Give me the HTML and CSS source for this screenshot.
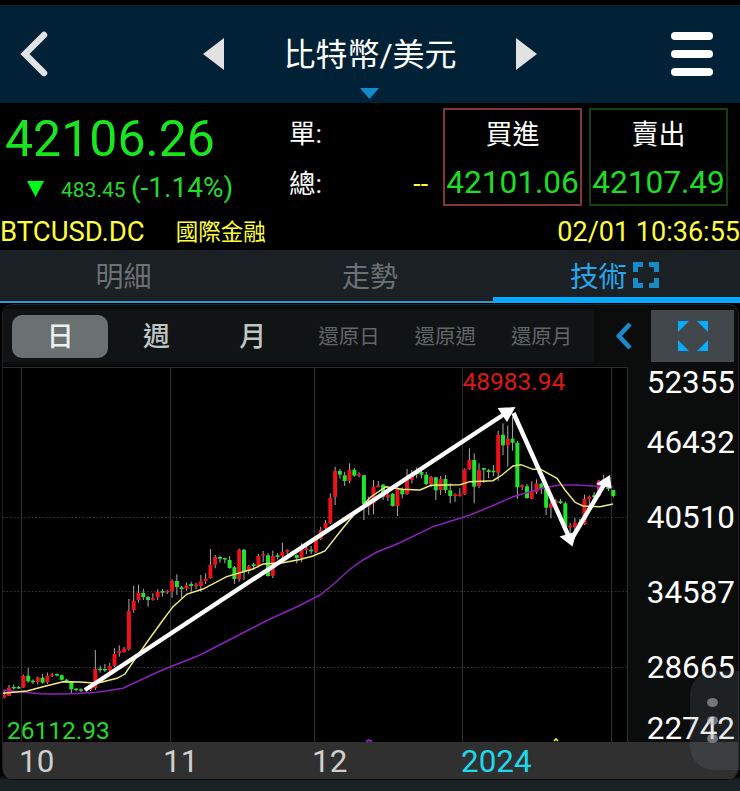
FILE: index.html
```html
<!DOCTYPE html>
<html lang="zh-Hant">
<head>
<meta charset="utf-8">
<title>比特幣/美元</title>
<link rel="stylesheet" href="styles.css">
</head>
<body>
<header class="topbar">
  <svg class="back" width="30" height="48" viewBox="0 0 30 48"><path d="M25 5 L6 24 L25 43" fill="none" stroke="#e2e2e4" stroke-width="6.5" stroke-linecap="round" stroke-linejoin="miter"/></svg>
  <div class="switcher">
    <svg width="21" height="32" viewBox="0 0 21 32"><path d="M21 0V32L0 16Z" fill="#e2e2e2"/></svg>
    <h1 class="title">比特幣/美元</h1>
    <svg width="21" height="32" viewBox="0 0 21 32"><path d="M0 0V32L21 16Z" fill="#e2e2e2"/></svg>
  </div>
  <div class="menu"><i></i><i></i><i></i></div>
  <svg class="drop" width="19" height="11" viewBox="0 0 19 11"><path d="M0 0H19L9.5 11Z" fill="#1489d0"/></svg>
</header>
<section class="quote">
  <div class="last">
    <div class="price">42106.26</div>
    <div class="change"><svg width="17" height="16" viewBox="0 0 17 16"><path d="M0 0H17L8.5 16Z" fill="#00fa1c"/></svg><span class="diff">483.45</span><span class="pct">(-1.14%)</span></div>
  </div>
  <div class="volume">
    <div class="vol-row"><span>單:</span></div>
    <div class="vol-row"><span>總:</span><b class="none">--</b></div>
  </div>
  <div class="deal buy"><span>買進</span><strong>42101.06</strong></div>
  <div class="deal sell"><span>賣出</span><strong>42107.49</strong></div>
</section>
<div class="meta"><span class="symbol">BTCUSD.DC</span><span class="market">國際金融</span><time>02/01 10:36:55</time></div>
<nav class="tabs">
  <span class="tab">明細</span>
  <span class="tab">走勢</span>
  <span class="tab active">技術<svg width="26" height="26" viewBox="0 0 26 26"><path d="M2.5 10V2.5H10M16 2.5H23.5V10M23.5 16V23.5H16M10 23.5H2.5V16" fill="none" stroke="#168bc9" stroke-width="5"/></svg></span>
</nav>
<main class="panel">
  <div class="toolbar">
    <div class="periods">
      <span class="period selected">日</span><span class="period">週</span><span class="period">月</span>
      <span class="period adj">還原日</span><span class="period adj">還原週</span><span class="period adj">還原月</span>
    </div>
    <svg class="chev" width="18" height="28" viewBox="0 0 18 28"><path d="M15 2L4 14L15 26" fill="none" stroke="#198bcc" stroke-width="4.6"/></svg>
    <div class="full"><svg width="30" height="30" viewBox="0 0 30 30"><path d="M0 0H11L0 11ZM19 0H30V11ZM0 19V30H11ZM30 19V30H19Z" fill="#0aaaff"/></svg></div>
  </div>
  <div class="chart-row">
    <svg id="chart" class="chart" width="625" height="376" viewBox="3 366 625 376">
      <rect x="3" y="366" width="625" height="376" fill="#000"/>
      <g stroke="#303030" fill="none">
        <path d="M3 367.5H627.5V742M21.5 367V742M170.5 367V742M314.5 367V742M462.5 367V742M611.5 367V742"/>
        <path d="M3 517.5H627M3 591.5H627M3 667.5H627" stroke="#363636" stroke-dasharray="1.6 2"/>
      </g>
      <g id="candles"></g>
      <polyline fill="none" stroke="#8a22b8" stroke-width="1.5" points="3,690 20,691.7 43,694 67,694 97,692.3 123,688.3 160,671 200,655 235,637 268,620 297,606.7 320,595 335,583 349,570 363,560 377,552 400,542.7 433,526.7 470,515 492,506 513,496.7 543,488 560,485 577,485 593,486 613,486.7"/>
      <polyline fill="none" stroke="#efef7c" stroke-width="1.4" points="3,693.3 27,691 43,686.7 63,681.7 80,682 97,683.3 117,678.3 125,674 133,662 150,638 163,620 173,606.7 187,594 203,589 226.7,576.7 253,569 263,564 283,562.7 300,559.5 313,556 325,551 340,531.7 353,515.7 371,496.7 386,486.7 402,489.3 420,490 431,485.3 460,484.7 470,481.7 493,480.7 502,475 513,466 521,464.7 533,469.3 540,469 557,478.3 565,490 575,502.3 583,506 600,506.7 613,504"/>
      <path d="M366 741.5L369 740L372 741.5" stroke="#8a22b8" stroke-width="2" fill="none"/>
      <path d="M554 741l2-2l2 2" stroke="#efef40" stroke-width="1.6" fill="none"/>
      <g stroke="#fff" stroke-width="4.4" fill="#fff">
        <path d="M85 690L506 413M513.5 413L569 537M571 540L605 483" fill="none"/>
        <path d="M515.5 407L497.5 408L507 422ZM572.5 546.5L559.5 536.5L576.5 531.5ZM610 475L596 484L611.5 488.5Z" stroke="none"/>
      </g>
      <text class="high" x="462.5" y="390">48983.94</text>
      <text class="low" x="7" y="738.5">26112.93</text>
    </svg>
    <div class="prices"><span>52355</span><span>46432</span><span>40510</span><span>34587</span><span>28665</span><span>22742</span></div>
  </div>
  <div class="months"><span>10</span><span>11</span><span>12</span><span class="year">2024</span></div>
</main>
<aside class="handle"><i></i><i></i><i></i></aside>
<script src="chart.js"></script>
</body>
</html>
```
FILE: styles.css
```css
* { box-sizing: border-box; }
body { margin: 0; height: 791px; overflow: hidden; background: linear-gradient(#000 775px, #1a2225 780px); padding-top: 5px; position: relative; color: #fff; font-family: Roboto, "Noto Sans CJK TC", sans-serif; }
svg { display: block; flex: none; }
.topbar { height: 98px; background: #002136; position: relative; display: flex; align-items: center; justify-content: space-between; padding: 0 27px 0 19px; }
.switcher { display: flex; align-items: center; width: 334px; justify-content: space-between; margin-left: 20px; }
.title { margin: 0; font-size: 32px; font-weight: 400; line-height: 44px; white-space: nowrap; padding-top: 2px; }
.menu { width: 42px; display: grid; gap: 10px; }
.menu i { height: 8px; border-radius: 4px; background: #fff; }
.drop { position: absolute; left: 360px; bottom: 4px; }
.quote { height: 108px; display: flex; padding-top: 5px; }
.last { width: 289px; color: #18e61e; }
.price { font-size: 50px; line-height: 62px; height: 60px; padding-left: 5px; white-space: nowrap; }
.change { display: flex; align-items: baseline; padding-left: 27px; height: 40px; line-height: 40px; color: #25d92b; }
.diff { font-size: 21px; margin-left: 17px; width: 70px; }
.pct { font-size: 28px; }
.volume { width: 154px; }
.vol-row { height: 50px; line-height: 52px; font-size: 26.5px; display: flex; justify-content: space-between; padding-right: 15px; }
.none { color: #ff3; font-weight: 400; }
.deal { width: 139px; height: 98px; border: 2px solid #843636; display: flex; flex-direction: column; align-items: center; }
.deal span { font-size: 27px; line-height: 50px; height: 48px; }
.deal strong { font-weight: 400; font-size: 31.6px; line-height: 49px; color: #1edd25; }
.sell { border-color: #16400f; margin-left: 7px; }
.meta { height: 39px; display: flex; line-height: 42px; color: #ffff3c; font-size: 27px; white-space: nowrap; }
.symbol { font-size: 27.5px; }
.market { margin-left: 31px; font-size: 22.5px; }
.meta time { margin-left: auto; }
.tabs { height: 53px; background: #1a2023; display: grid; grid-template-columns: 247px 246px 247px; border-bottom: 2px solid #3e96c8; }
.tab { display: flex; justify-content: center; align-items: center; font-size: 28px; color: #6c7174; height: 50px; }
.tab.active { color: #27a8ed; height: 53px; border-bottom: 6px solid #08aaff; gap: 6px; padding: 2px 4px 0 0; font-size: 28.5px; }
.panel { height: 476px; margin: 1px 1px 0 2px; border: 1px solid #1e2021; border-bottom: 0; border-radius: 10px 10px 12px 12px; background: #0b0c0c; overflow: hidden; }
.toolbar { height: 61px; display: flex; align-items: center; }
.periods { width: 591px; height: 53px; background: #111415; display: flex; align-items: center; padding: 2px 0 0 9px; }
.period { width: 96.3px; height: 43px; line-height: 44px; text-align: center; font-size: 27px; color: #bfc5c7; font-weight: 500; flex: none; }
.period.adj { font-size: 20.5px; font-weight: 400; color: #626668; line-height: 45px; }
.period.selected { background: #6b7072; color: #edf0f1; border-radius: 10px; }
.chev { margin: 1px 0 0 21px; }
.full { width: 83px; height: 52px; margin: 1px 0 0 18px; background: #41474a; display: flex; align-items: center; justify-content: center; }
.chart-row { display: flex; height: 376px; }
.chart { overflow: visible; }
.high, .low { font-size: 24.5px; }
.high { fill: #dc1818; }
.low { fill: #25d92b; }
.prices { flex: 1; display: grid; grid-template-rows: 32px 60px 75px 75px 75px 61px; align-items: end; justify-content: end; padding-right: 3px; font-size: 31.4px; line-height: 30px; }
.months { height: 37px; background: #303030; display: grid; grid-template-columns: 144px 149px 149px auto; padding-left: 16px; font-size: 31.4px; line-height: 39px; color: #cfcfcf; }
.months .year { color: #20d8ec; }
.handle { position: absolute; left: 690px; top: 671px; width: 50px; height: 99px; border-radius: 24px 0 0 24px; background: rgba(125,135,150,.16); display: flex; flex-direction: column; align-items: center; padding: 27px 6px 0 0; gap: 9px; }
.handle i { width: 11px; height: 9px; border-radius: 50%; background: rgba(190,190,190,.55); }
```
FILE: chart.js
```js
// [direction, body top, body bottom, wick top, wick bottom]
const candles = [
["r",695,697.3,690,698.3],["r",687.7,696,685,696],["g",687,688.5,684.5,689.5],["g",687,688.5,686,689],["r",676,687.5,674.5,688],
["g",675.7,681.3,668,682.7],["g",680.7,682,679.3,684],["r",677.5,682,676.5,684.5],["g",677.7,682.7,674,683.5],["r",675.7,682.3,672.5,684],
["r",674.3,675.7,673,677],["g",674,675.3,673.5,676.5],["g",675.3,679.7,674.5,680.5],["g",679.7,682,679,682.7],["g",682,689.3,681,693.3],
["g",688.7,690,688,691.3],["g",689.3,690.5,688.3,692],["r",689,690.3,688,691],["r",688,690,687,691],["r",669,688,650,690],
["g",668.7,670,665.5,672.7],["g",669,670.3,664,672],["r",666,670.7,663,675],["r",654,666,648.3,667],["r",650.7,653.3,645.3,656.7],
["r",648.7,652,647,652.7],["r",611,649.3,599,650.7],["r",600.7,610,585.7,612.7],["r",592.7,600,584.7,602.7],["g",593,597,588.7,600],
["g",597,600,596,606.7],["r",598.3,600,593.3,600.7],["r",592,597.3,589.3,600],["g",591,592.7,589,596.7],["r",591,592.3,590,594],
["r",581,591,579.3,597.7],["g",581,587,574.3,595],["g",587.3,589,586,598.3],["r",585.3,588.7,582.7,590.7],["g",584,586,581.7,591.7],
["r",584.7,586,582.7,589.3],["r",581.3,586,575,591.7],["r",578.7,581,573.3,584],["r",564.7,578,549,578.7],["r",557,564.7,555,568.3],
["g",557,558.7,555.7,562.7],["g",558,559.3,557.7,563.3],["g",560,568,556,568.7],["g",567.3,579,566,584],["r",549.7,579,548.7,581.7],
["g",549.7,572,549,580],["r",566,570.7,565,574],["g",564.3,566,562.7,570],["r",556,565.7,554,567.3],["r",554.3,555.7,551,562],
["g",555.3,576,553.3,576.7],["r",556,576,550.7,578],["g",555.3,557,553.3,559.3],["r",552,556.3,542.7,558.3],["r",550,551.7,549.3,554.3],
["g",552.3,554,551,555.3],["g",555,558,554.3,563.3],["r",549.3,558,543.3,562],["r",548.5,550,546.7,554.3],["g",549.7,551.3,546,554],
["r",538.5,551.8,538,553.3],["r",530,538.7,526.7,540],["r",523,528.3,520,530],["r",497.7,523.3,493.3,524],["r",471,497,466.7,505],
["g",471,474.7,469,478.7],["g",475.3,481,471.7,486],["r",469.7,481,463.3,483.3],["g",469.7,475.7,468,476.7],["r",474,475.7,472.3,477.3],
["g",475.3,504,475,520],["r",501.7,506.7,496.7,515],["r",486.7,503.3,480,514.3],["r",485.3,487,481,487.3],["g",484.7,496.7,484,500],
["r",494.7,497.7,490,501],["g",493.7,506,493,506.7],["r",488.7,506,487.3,516],["g",489.3,494.3,487.3,498.3],["r",480,494,469,495],
["r",475,480,470,483.3],["g",471.7,474,467.7,478.3],["g",472,474.7,471,478.3],["g",474.7,484,472,485.3],["r",477,484,476,487.3],
["g",477.3,490.3,476.7,500],["r",479,490,476,495],["g",479,490,475,493.3],["g",490.3,496,483.3,503.3],["r",494.3,496,493.3,501.7],
["r",494.3,496,488.3,496.7],["r",469.3,494.3,468.3,495],["r",459.7,469.3,448.3,470],["g",460,486.7,453.3,503.3],["r",469.7,486,463.3,488.3],
["g",468,469.7,468,483],["g",470.3,472,469,478],["g",470.7,472,465,476],["r",434.7,472.7,430.7,480.7],["g",434.7,445.3,423.3,455],
["r",438.7,445.3,425.7,466.7],["g",438.7,442.7,416.7,450.7],["g",442.7,487.3,441,499],["r",485.3,487,484.3,490],["g",486.3,498,484,498.7],
["r",491.3,498.7,481.3,499.3],["r",483.3,492,479.3,494],["g",483.7,489,482.7,494],["g",489,507.7,485,515],["r",503.3,507.7,498.3,518.3],
["r",500.7,503,499,504],["g",501.3,503,499,504],["g",503.3,526.7,501.7,528.3],["r",525.7,527.3,522.7,533.3],["r",522.7,527,517.7,533.3],
["g",522.3,523.7,519,524.3],["r",499,524,494.7,525],["r",496.7,499.3,495.3,506],["g",495.3,497,492,498.3],["m",480.7,496,480,497],
["m",479,482,475,487],["g",483,489,481,491],["g",490,496,490,497.7]
];
const colors = { r: "#ee1117", g: "#22e52b", m: "#e8186c" };
const group = document.getElementById("candles");
function rect(x, y, w, h, fill) {
  const r = document.createElementNS("http://www.w3.org/2000/svg", "rect");
  Object.entries({ x, y, width: w, height: h, fill }).forEach(([k, v]) => r.setAttribute(k, v));
  group.appendChild(r);
}
candles.forEach(([c, top, bottom, high, low], i) => {
  const x = 4.2 + i * 4.796;
  rect(x - 0.5, high, 1, low - high, "#aaa");
  rect(x - 2, top, 4, Math.max(1.5, bottom - top), colors[c]);
});
```
